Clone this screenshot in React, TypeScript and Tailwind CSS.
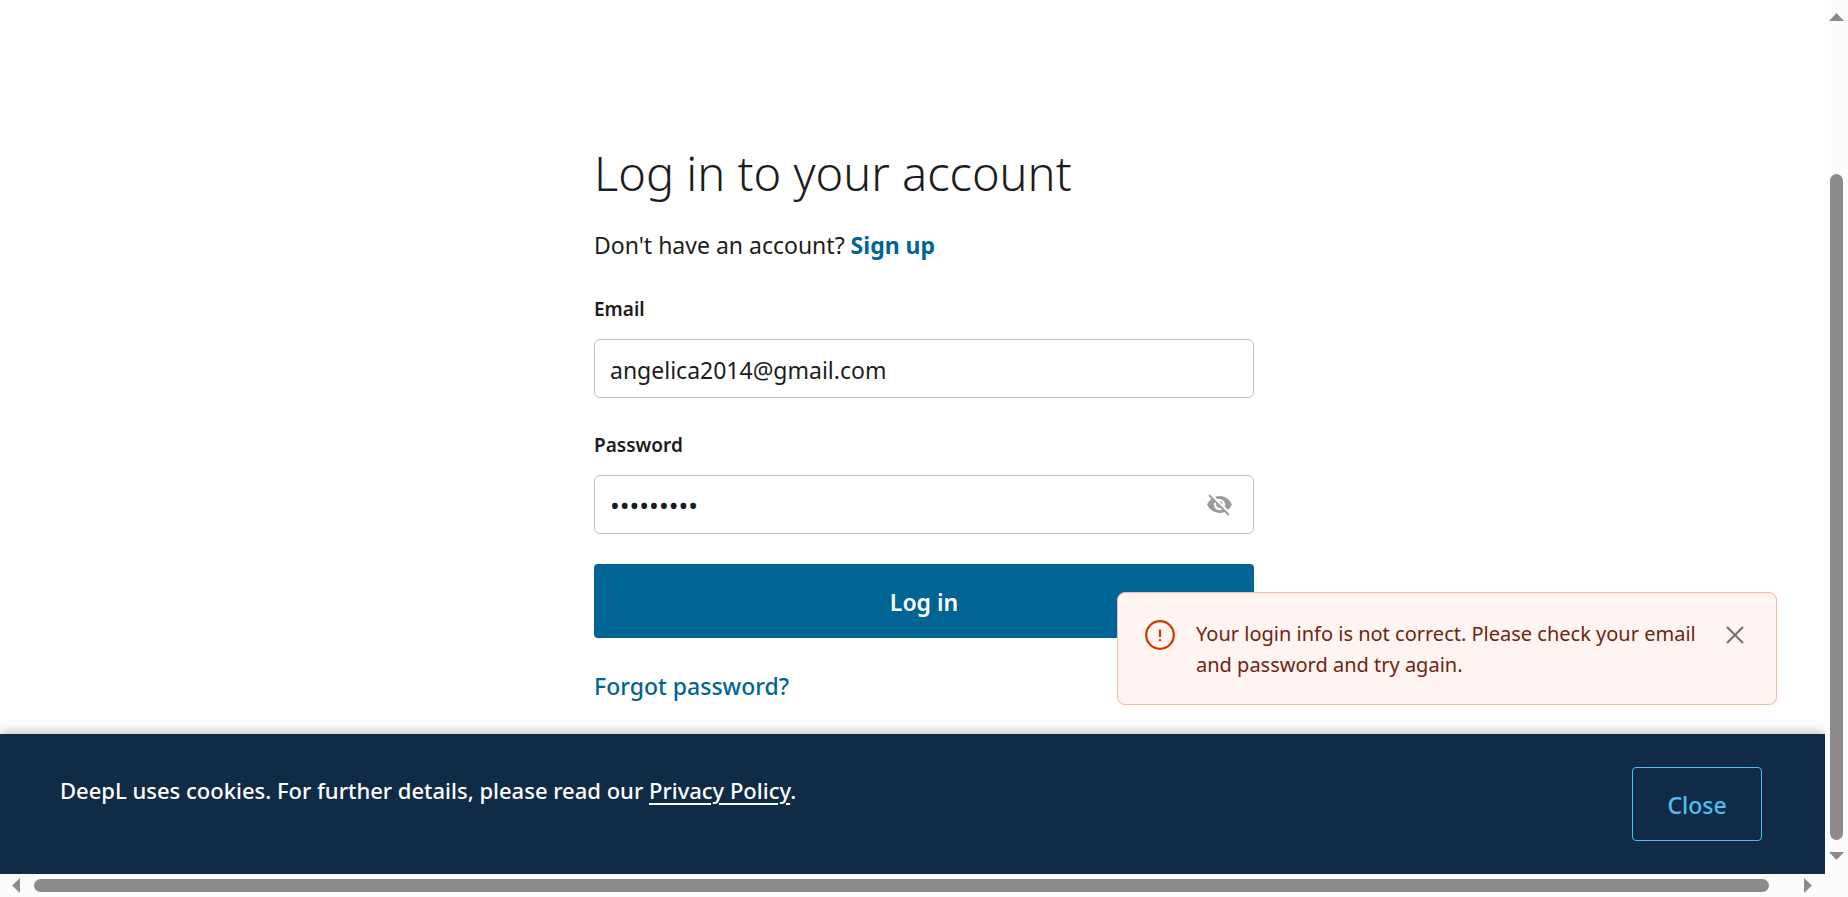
import { useState } from "react";
import { MdVisibilityOff } from "react-icons/md";

function Field({
  id,
  label,
  type,
  value,
  onChange,
  inputClass,
  children,
}: {
  id: string;
  label: string;
  type: string;
  value: string;
  onChange: (value: string) => void;
  inputClass: string;
  children?: React.ReactNode;
}) {
  return (
    <div>
      <label htmlFor={id} className="block text-[19px] leading-[31px] font-semibold">
        {label}
      </label>
      <div className="mt-[14px] flex h-[59px] items-center rounded-md border border-[#c0c0c0] bg-white pr-5 pl-[15px]">
        <input
          id={id}
          type={type}
          value={value}
          onChange={(e) => onChange(e.target.value)}
          className={`min-w-0 flex-1 bg-transparent leading-8 outline-none ${inputClass}`}
        />
        {children}
      </div>
    </div>
  );
}

function LoginForm() {
  const [email, setEmail] = useState("angelica2014@gmail.com");
  const [password, setPassword] = useState("secret123");
  return (
    <form className="w-full max-w-[660px]" onSubmit={(e) => e.preventDefault()}>
      <h1 className="text-[47px] leading-[64px] font-light">Log in to your account</h1>
      <p className="mt-6 text-[23px] leading-8">
        Don't have an account?{" "}
        <a href="#signup" className="font-bold text-[#006494]">
          Sign up
        </a>
      </p>
      <div className="mt-[33px] flex flex-col gap-8">
        <Field
          id="email"
          label="Email"
          type="email"
          value={email}
          onChange={setEmail}
          inputClass="pt-0.5 text-[23px]"
        />
        <Field
          id="password"
          label="Password"
          type="password"
          value={password}
          onChange={setPassword}
          inputClass="text-[26px]"
        >
          <button type="button" aria-label="Show password" className="text-[#9b9b9b]">
            <MdVisibilityOff size={27} />
          </button>
        </Field>
      </div>
      <button type="submit" className="mt-[30px] h-[74px] w-full rounded-sm bg-[#006494] pt-0.5 text-[23px] font-semibold text-white">
        Log in
      </button>
      <a href="#forgot" className="mt-8 inline-block text-[23px] leading-8 font-medium text-[#006494]">
        Forgot password?
      </a>
    </form>
  );
}

function ErrorToast() {
  return (
    <div
      role="alert"
      className="absolute right-12 bottom-[29px] flex h-[113px] w-[660px] max-w-full items-start rounded-lg border border-[#ffb3a1] bg-[#fef4f1] pt-[25px] pr-8 pl-[27px]"
    >
      <svg width="30" height="30" viewBox="0 0 30 30" className="mt-0.5 shrink-0" aria-hidden="true">
        <circle cx="15" cy="15" r="13.8" fill="none" stroke="#d13500" strokeWidth="2.2" />
        <path d="M15 9.5v7.6M15 19.2v2" stroke="#d13500" strokeWidth="2.2" fill="none" />
      </svg>
      <p className="ml-[21px] flex-1 pr-5 text-[20px] leading-[31px] text-[#6e2410]">
        Your login info is not correct. Please check your email and password and try again.
      </p>
      <button type="button" aria-label="Dismiss" className="mt-2">
        <svg width="18" height="18" viewBox="0 0 18 18" aria-hidden="true">
          <path d="M1 1l16 16M17 1L1 17" stroke="#6f6f6f" strokeWidth="2" fill="none" />
        </svg>
      </button>
    </div>
  );
}

function CookieBanner() {
  return (
    <section className="relative flex h-[140px] shrink-0 items-start justify-between bg-[#0f2b46] pt-[33px] pr-[63px] pl-[60px] shadow-[0_0_12px_rgba(0,0,0,0.35)]">
      <p className="mt-[7px] text-[22px] leading-8 font-medium text-white">
        DeepL uses cookies. For further details, please read our{" "}
        <a href="#privacy" className="underline decoration-2 underline-offset-4">
          Privacy Policy
        </a>
        .
      </p>
      <button type="button" className="h-[74px] w-[130px] rounded-sm border border-[#4fbef0] pt-0.5 text-[23px] font-medium text-[#4fbef0]">
        Close
      </button>
    </section>
  );
}

const arrowPaths = {
  up: "M0 8L7.5 0L15 8Z",
  down: "M0 0H15L7.5 8Z",
  left: "M8 0V15L0 7.5Z",
  right: "M0 0L8 7.5L0 15Z",
};

function Arrow({ direction }: { direction: keyof typeof arrowPaths }) {
  const vertical = direction === "up" || direction === "down";
  return (
    <svg width={vertical ? 15 : 8} height={vertical ? 8 : 15} className="shrink-0" aria-hidden="true">
      <path d={arrowPaths[direction]} fill="#8b8b8b" />
    </svg>
  );
}

export default function App() {
  return (
    <div className="flex h-screen flex-col bg-[#fcfcfc] font-['Noto_Sans','Open_Sans',sans-serif] text-[#1b1c20]">
      <div className="flex min-h-0 flex-1">
        <div className="flex min-w-0 flex-1 flex-col overflow-hidden bg-white">
          <main className="relative flex min-h-0 flex-1 justify-center pt-[141px] pl-[23px]">
            <LoginForm />
            <ErrorToast />
          </main>
          <CookieBanner />
        </div>
        <div className="flex w-[23px] shrink-0 flex-col items-center pt-[13px] pb-[14px]" aria-hidden="true">
          <Arrow direction="up" />
          <div className="mt-[153px] mb-3 w-[13px] flex-1 rounded-full bg-[#8b8b8b]" />
          <Arrow direction="down" />
        </div>
      </div>
      <div className="flex h-[23px] shrink-0 items-center pr-9 pl-3" aria-hidden="true">
        <Arrow direction="left" />
        <div className="mr-[35px] ml-[14px] h-[13px] flex-1 rounded-full bg-[#8b8b8b]" />
        <Arrow direction="right" />
      </div>
    </div>
  );
}
